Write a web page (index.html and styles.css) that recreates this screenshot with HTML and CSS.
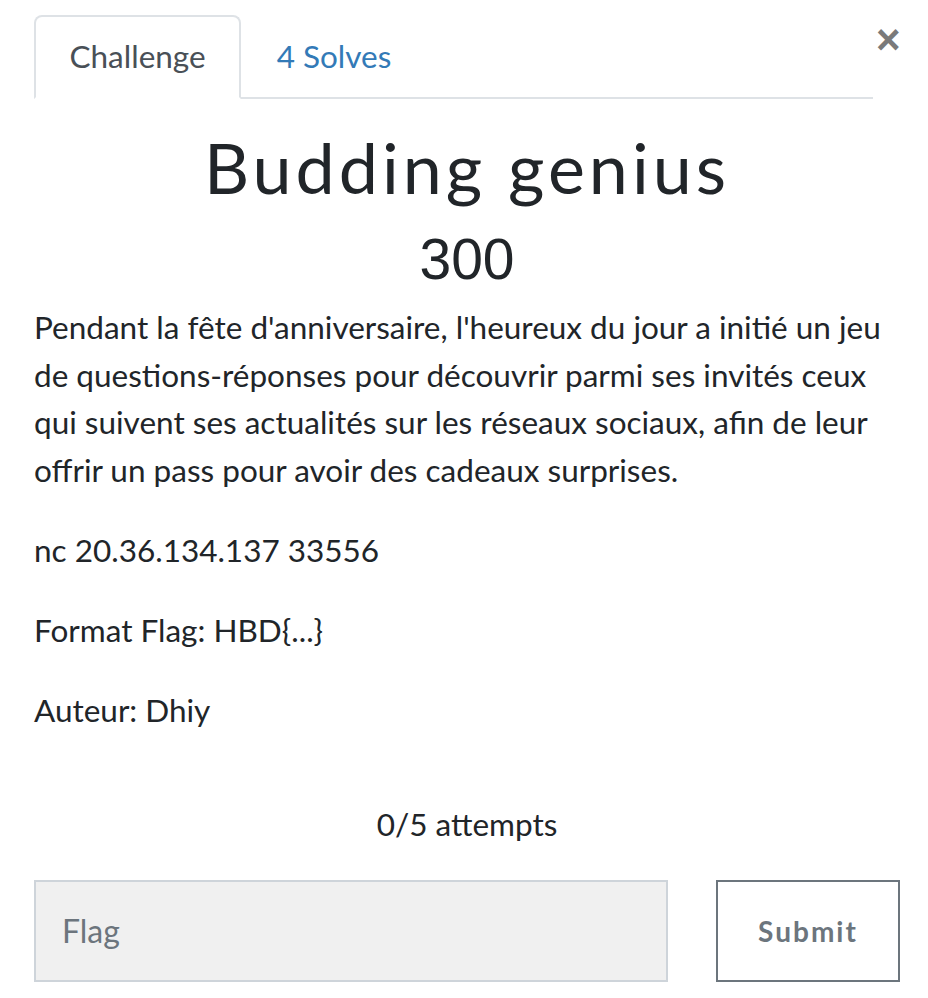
FILE: index.html
```html
<!DOCTYPE html>
<html lang="fr">
<head>
<meta charset="utf-8">
<title>Budding genius</title>
<link rel="stylesheet" href="styles.css">
</head>
<body>
<div class="modal">
  <div class="header">
    <ul class="tabs">
      <li class="tab active">Challenge</li>
      <li class="tab link">4 Solves</li>
    </ul>
    <button class="close" aria-label="Close">&times;</button>
  </div>
  <h2 class="title">Budding genius</h2>
  <h3 class="value">300</h3>
  <div class="desc">
    <p>Pendant la fête d'anniversaire, l'heureux du jour a initié un jeu de questions-réponses pour découvrir parmi ses invités ceux qui suivent ses actualités sur les réseaux sociaux, afin de leur offrir un pass pour avoir des cadeaux surprises.</p>
    <p>nc 20.36.134.137 33556</p>
    <p>Format Flag: HBD{...}</p>
    <p>Auteur: Dhiy</p>
  </div>
  <p class="attempts">0/5 attempts</p>
  <div class="submit-row">
    <input class="flag" type="text" placeholder="Flag">
    <button class="submit">Submit</button>
  </div>
</div>
</body>
</html>
```
FILE: styles.css
```css
html, body {
  margin: 0;
  padding: 0;
  background: #fff;
}
body {
  font-family: Lato, "Liberation Sans", sans-serif;
  color: #212529;
  font-size: 31.5px;
  line-height: 47.5px;
}
.modal {
  padding: 15px 28px 0 34px;
}
.header {
  display: flex;
  align-items: flex-start;
}
.tabs {
  flex: 1;
  display: flex;
  list-style: none;
  margin: 0;
  padding: 0;
  border-bottom: 2px solid #dee2e6;
}
.tab {
  padding: 16px 33.5px 17px;
  font-size: 31.5px;
  line-height: 47px;
  margin-bottom: -2px;
  border: 2px solid transparent;
  border-radius: 8px 8px 0 0;
}
.tab.active {
  color: #495057;
  background: #fff;
  border-color: #dee2e6 #dee2e6 #fff;
}
.tab.link {
  color: #337ab7;
}
.close {
  background: none;
  border: 0;
  padding: 0;
  margin: 4px 0 0 3px;
  font-family: "Liberation Sans", sans-serif;
  font-size: 42px;
  font-weight: bold;
  line-height: 1;
  color: #7a7a7a;
  width: 24px;
}
.title {
  margin: 28px 0 0;
  text-align: center;
  font-weight: 400;
  font-size: 70px;
  line-height: 80px;
  letter-spacing: 4px;
  color: #212529;
}
.value {
  margin: 17px 0 0;
  text-align: center;
  font-family: "Liberation Sans", sans-serif;
  font-weight: 400;
  font-size: 57px;
  line-height: 70px;
}
.desc {
  margin-top: 10px;
}
.desc p {
  margin: 0 0 32.5px;
}
.attempts {
  text-align: center;
  margin: 67px 0 31px;
}
.submit-row {
  display: flex;
  gap: 48px;
}
.flag {
  flex: 0 0 634px;
  box-sizing: border-box;
  height: 102px;
  border: 2px solid #ced4da;
  background: #f0f0f0;
  padding: 0 26px;
  font-family: Lato, sans-serif;
  font-size: 32px;
  color: #495057;
}
.flag::placeholder {
  color: #6c757d;
}
.submit {
  width: 184px;
  height: 102px;
  box-sizing: border-box;
  border: 2px solid #6c757d;
  background: #fff;
  color: #6c757d;
  font-family: Lato, sans-serif;
  font-weight: 700;
  font-size: 28px;
  letter-spacing: 2px;
}
```
